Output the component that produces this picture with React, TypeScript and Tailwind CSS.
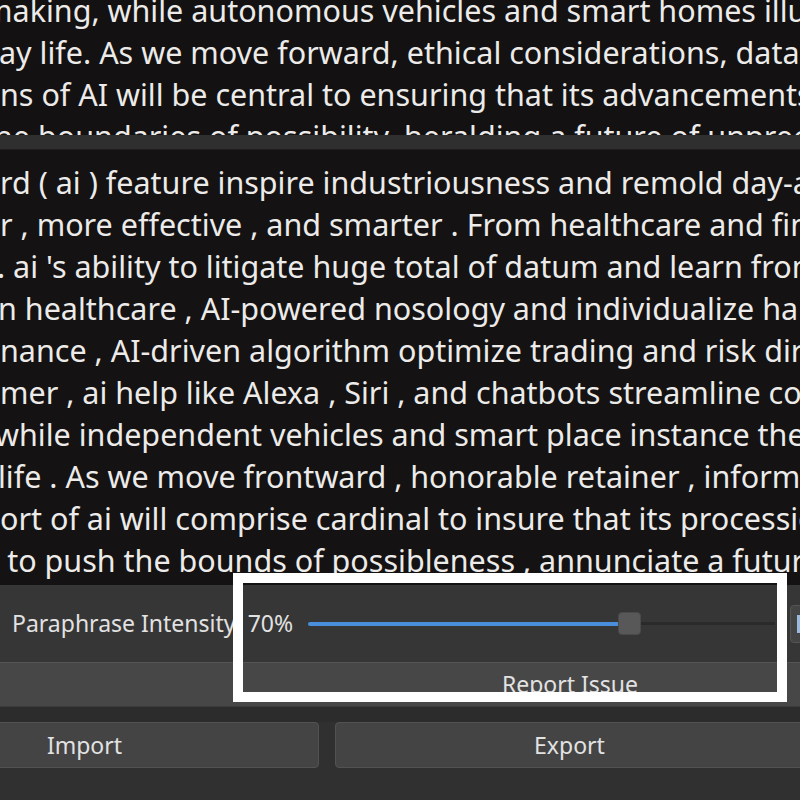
import React from "react";

const topLines = [
  { text: "making, while autonomous vehicles and smart homes illustrate the", shift: "-ml-[16px]" },
  { text: "ay life. As we move forward, ethical considerations, data privacy", shift: "-ml-[1px]" },
  { text: "ns of AI will be central to ensuring that its advancements benefit", shift: "ml-0" },
  { text: "he boundaries of possibility, heralding a future of unprecedented", shift: "-ml-[6px]" },
];

const bodyLines = [
  { text: "rd ( ai ) feature inspire industriousness and remold day-after-day", shift: "ml-0" },
  { text: "r , more effective , and smarter . From healthcare and finance", shift: "ml-0" },
  { text: ". ai 's ability to litigate huge total of datum and learn from", shift: "-ml-[3px]" },
  { text: "n healthcare , AI-powered nosology and individualize handling", shift: "-ml-[2px]" },
  { text: "nance , AI-driven algorithm optimize trading and risk direction", shift: "ml-0" },
  { text: "mer , ai help like Alexa , Siri , and chatbots streamline communication", shift: "ml-0" },
  { text: "while independent vehicles and smart place instance the integration", shift: "-ml-[5px]" },
  { text: "life . As we move frontward , honorable retainer , information", shift: "-ml-[2px]" },
  { text: "ort of ai will comprise cardinal to insure that its procession", shift: "ml-0" },
  { text: "e to push the bounds of possibleness , annunciate a future", shift: "-ml-[18px]" },
];

export default function App() {
  return (
    <div className="relative w-[800px] h-[800px] overflow-hidden bg-[#303030] font-['Noto_Sans',sans-serif]">
      {/* upper (original) text */}
      <div className="h-[135px] overflow-hidden bg-[#131111] text-[30.5px] leading-[42px] text-[#ecebe9]">
        <div className="-mt-[11px]">
          {topLines.map((l) => (
            <div key={l.text} className={`whitespace-nowrap ${l.shift}`}>
              {l.text}
            </div>
          ))}
        </div>
      </div>

      <div className="h-[15px] bg-[#2f2f2f] border-b border-[#1e1e1e]" />

      {/* paraphrased text */}
      <div className="h-[435px] overflow-hidden bg-[#141212] pt-[11px] text-[30.5px] leading-[42px] text-[#ecebe9]">
        {bodyLines.map((l) => (
          <div key={l.text} className={`whitespace-nowrap ${l.shift}`}>
            {l.text}
          </div>
        ))}
      </div>

      {/* intensity controls */}
      <div className="h-[77px] bg-[#363636] flex items-center pl-[12px] whitespace-nowrap">
        <span className="text-[23px] text-[#e2e2e2]">Paraphrase Intensity: 70%</span>
        <div className="ml-[15px] w-[467px] shrink-0 flex items-center h-[24px]">
          <div className="w-[310px] h-[4px] bg-[#4a8fdc] rounded-l-full" />
          <div className="w-[23px] h-[23px] shrink-0 rounded-[4px] bg-[#585858] border border-[#4a4a4a]" />
          <div className="flex-1 h-[3px] bg-[#2a2a2a]" />
        </div>
        <div className="ml-[15px] w-[40px] h-[38px] shrink-0 rounded-[4px] bg-[#444] border border-[#555] flex items-center pl-[6px]">
          <div className="w-[4px] h-[18px] bg-[#9cb8e0]" />
        </div>
      </div>

      {/* report issue */}
      <div className="h-[45px] bg-[#474747] border-t border-[#555] border-b border-b-[#3c3c3c] flex items-center justify-center pl-[340px] text-[23px] text-[#e2e2e2]">
        Report Issue
      </div>

      <div className="h-[15px] bg-[#2c2c2c]" />

      {/* import / export */}
      <div className="flex gap-[16px] -ml-[150px] w-[954px]">
        <button className="flex-1 h-[46px] rounded-[4px] bg-[#444] border border-[#525252] text-[23px] text-[#e2e2e2]">
          Import
        </button>
        <button className="flex-1 h-[46px] rounded-[4px] bg-[#444] border border-[#525252] text-[23px] text-[#e2e2e2]">
          Export
        </button>
      </div>

      {/* highlight annotation */}
      <div className="absolute left-[233px] top-[573px] w-[554px] h-[129px] border-[10px] border-white" />
    </div>
  );
}
